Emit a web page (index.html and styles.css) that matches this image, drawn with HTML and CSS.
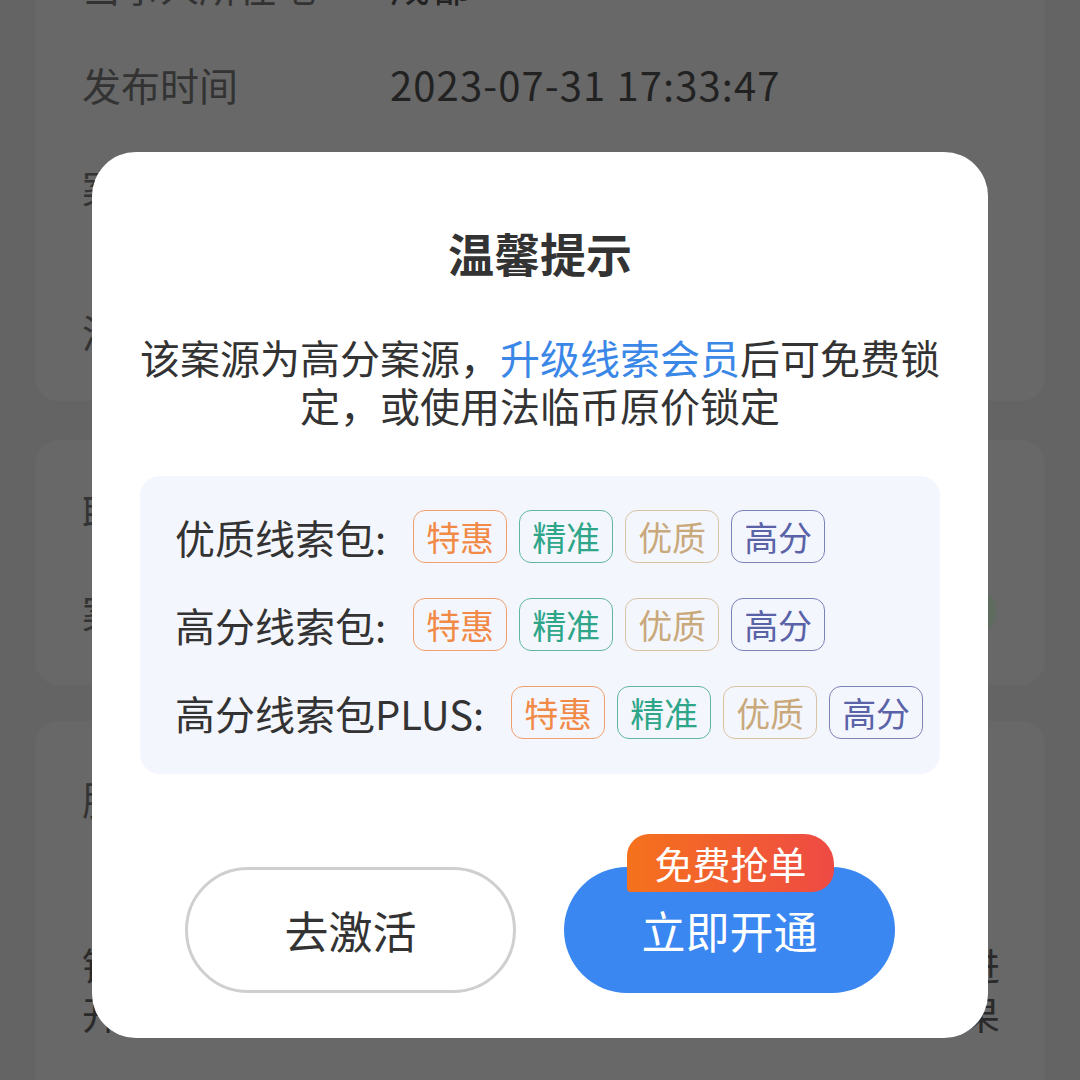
FILE: index.html
```html
<!DOCTYPE html>
<html lang="zh-CN">
<head>
<meta charset="utf-8">
<title>温馨提示</title>
<link rel="stylesheet" href="styles.css">
</head>
<body>
<div class="page">
  <section class="card card-a">
    <div class="row r1"><span class="lbl">当事人所在地</span><span class="val">成都</span></div>
    <div class="row r2"><span class="lbl">发布时间</span><span class="val">2023-07-31 17:33:47</span></div>
    <div class="row r3"><span class="lbl">案源类型</span><span class="val">合同纠纷，借贷纠纷，劳动争议，</span></div>
    <div class="row r4"><span class="lbl">涉案金额</span><span class="val">10万-50万</span></div>
  </section>
  <section class="card card-b">
    <div class="row rb1"><span class="lbl">联系方式</span><span class="val">138****5678</span></div>
    <div class="row rb2"><span class="lbl">案源状态</span><span class="dot"></span></div>
  </section>
  <section class="card card-c">
    <div class="row rc1"><span class="lbl">服务说明</span></div>
    <div class="para">
      <div class="pline">锁定案源后可查看当事人联系方式并及时跟进</div>
      <div class="pline">开通会员可享受更多优质案源及更好的服务效果</div>
    </div>
  </section>
</div>

<div class="overlay">
  <div class="modal">
    <h2 class="title">温馨提示</h2>
    <p class="desc">该案源为高分案源，<span class="hl">升级线索会员</span>后可免费锁定，或使用法临币原价锁定</p>
    <div class="packs">
      <div class="pack">
        <span class="pack-name">优质线索包:</span>
        <span class="tag t-hui">特惠</span><span class="tag t-zhun">精准</span><span class="tag t-zhi">优质</span><span class="tag t-gao">高分</span>
      </div>
      <div class="pack">
        <span class="pack-name">高分线索包:</span>
        <span class="tag t-hui">特惠</span><span class="tag t-zhun">精准</span><span class="tag t-zhi">优质</span><span class="tag t-gao">高分</span>
      </div>
      <div class="pack">
        <span class="pack-name">高分线索包PLUS:</span>
        <span class="tag t-hui">特惠</span><span class="tag t-zhun">精准</span><span class="tag t-zhi">优质</span><span class="tag t-gao">高分</span>
      </div>
    </div>
    <div class="actions">
      <button class="btn btn-ghost">去激活</button>
      <button class="btn btn-primary">立即开通<span class="badge">免费抢单</span></button>
    </div>
  </div>
</div>
</body>
</html>
```
FILE: styles.css
```css
* { box-sizing: border-box; }
html, body {
  margin: 0;
  padding: 0;
  width: 1080px;
  height: 1080px;
  overflow: hidden;
  background: #646464;
  font-family: "Noto Sans CJK SC", "Noto Sans", sans-serif;
}
body { position: relative; }

.page {
  padding: 0 35px;
  display: flex;
  flex-direction: column;
}
.card {
  background: #686868;
  border-radius: 24px;
  padding: 0 35px 0 47px;
}
.card-a { margin-top: -80px; padding-top: 40px; padding-bottom: 45px; }
.card-b { margin-top: 39px; padding-top: 46px; padding-bottom: 49px; }
.card-c { margin-top: 36px; padding-top: 52px; padding-bottom: 60px; }

.row {
  display: flex;
  align-items: center;
  font-size: 39px;
  line-height: 50px;
  height: 50px;
}
.lbl { color: #333333; width: 308px; flex: none; }
.val { color: #222222; white-space: nowrap; font-size: 40px; letter-spacing: 1.1px; }
.r2 { margin-top: 49px; }
.r3 { margin-top: 52px; }
.r4 { margin-top: 95px; }
.rb2 { margin-top: 50px; justify-content: space-between; }
.dot {
  width: 44px;
  height: 44px;
  margin-right: 13px;
  border-radius: 50%;
  background: #606b60;
}
.para { margin-top: 116px; padding-right: 10px; }
.pline {
  font-size: 38px;
  line-height: 49px;
  color: #2a2a2a;
  text-align: justify;
  text-align-last: justify;
  white-space: nowrap;
  overflow: hidden;
}

.overlay {
  position: absolute;
  inset: 0;
  display: flex;
  justify-content: center;
  align-items: flex-start;
  padding-top: 152px;
}
.modal {
  width: 896px;
  background: #ffffff;
  border-radius: 44px;
  padding: 70px 48px 45px;
  display: flex;
  flex-direction: column;
  align-items: center;
}
.title {
  margin: 0;
  font-size: 46px;
  line-height: 60px;
  font-weight: 700;
  color: #333333;
}
.desc {
  margin: 51px 0 0;
  font-size: 40px;
  line-height: 48px;
  color: #333333;
  text-align: center;
}
.hl { color: #3b87e8; }

.packs {
  margin-top: 47px;
  width: 800px;
  background: #f4f6fd;
  border-radius: 20px;
  padding: 34px 10px 35px 35px;
  display: flex;
  flex-direction: column;
  gap: 35px;
}
.pack {
  display: flex;
  align-items: center;
  height: 53px;
}
.pack-name {
  font-size: 40px;
  color: #333333;
  margin-right: 27px;
  white-space: nowrap;
}
.tag {
  width: 94px;
  height: 53px;
  border: 1px solid;
  border-radius: 12px;
  display: flex;
  align-items: center;
  justify-content: center;
  font-size: 34px;
  margin-right: 12px;
  flex: none;
}
.t-hui { color: #f28a47; border-color: #f0a06c; }
.t-zhun { color: #2fa689; border-color: #5fb7a2; }
.t-zhi { color: #c9a97b; border-color: #d8c3a4; }
.t-gao { color: #5b63a8; border-color: #7c82b8; }

.actions {
  margin-top: 93px;
  display: flex;
  gap: 48px;
}
.btn {
  width: 331px;
  height: 126px;
  border-radius: 63px;
  font-family: inherit;
  font-size: 44px;
  padding: 0;
  display: flex;
  align-items: center;
  justify-content: center;
}
.btn-ghost {
  background: #ffffff;
  border: 3px solid #cfcfcf;
  color: #333333;
}
.btn-primary {
  position: relative;
  background: #3a87f1;
  border: none;
  color: #ffffff;
}
.badge {
  position: absolute;
  left: 63px;
  top: -33px;
  width: 207px;
  height: 58px;
  border-radius: 22px 30px 22px 4px;
  background: linear-gradient(90deg, #f5721c 0%, #ee4a44 100%);
  color: #ffffff;
  font-size: 38px;
  line-height: 58px;
  text-align: center;
}
```
